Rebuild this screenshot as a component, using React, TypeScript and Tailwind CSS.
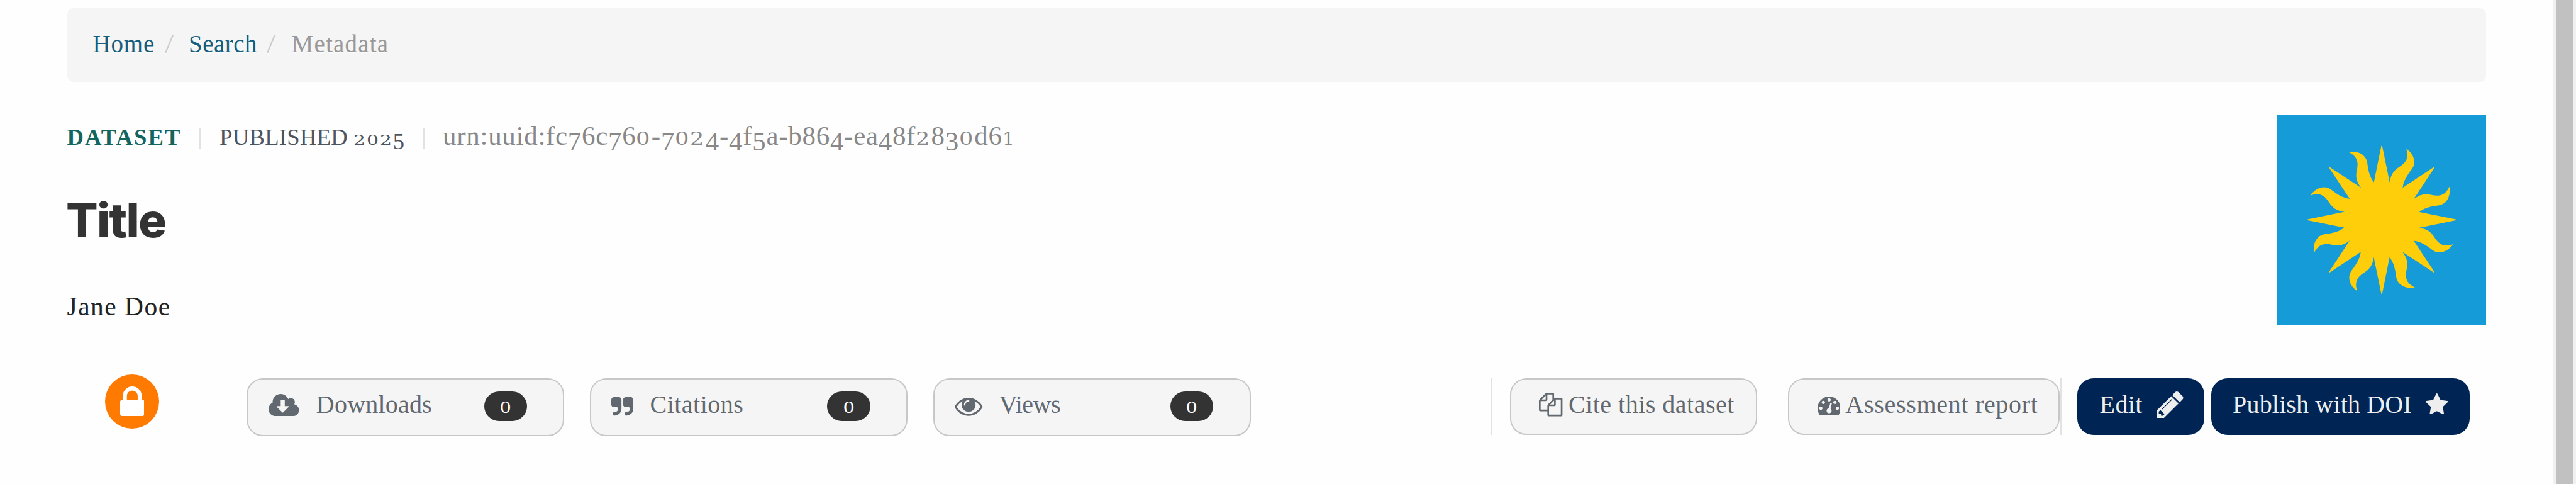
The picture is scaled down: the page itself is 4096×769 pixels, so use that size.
import React from "react";

const CLOUD =
  "M1280 928q0-14-9-23t-23-9h-224v-352q0-13-9.5-22.5t-22.5-9.5h-192q-13 0-22.5 9.5t-9.5 22.5v352h-224q-13 0-22.5 9.5t-9.5 22.5q0 14 9 23l352 352q9 9 23 9t23-9l351-351q10-12 10-24zm640 224q0 159-112.5 271.5t-271.5 112.5h-1088q-185 0-316.5-131.5t-131.5-316.5q0-130 70-240t188-165q-2-30-2-43 0-212 150-362t362-150q156 0 285.5 87t188.5 231q71-62 166-62 106 0 181 75t75 181q0 76-41 138 130 31 213.5 135.5t83.5 238.5z";
const QUOTE =
  "M768 320v704q0 104-40.5 198.5t-109.5 163.5-163.5 109.5-198.5 40.5h-64q-26 0-45-19t-19-45v-128q0-26 19-45t45-19h64q106 0 181-75t75-181v-32q0-40-28-68t-68-28h-224q-80 0-136-56t-56-136v-384q0-80 56-136t136-56h384q80 0 136 56t56 136zM1664 320v704q0 104-40.5 198.5t-109.5 163.5-163.5 109.5-198.5 40.5h-64q-26 0-45-19t-19-45v-128q0-26 19-45t45-19h64q106 0 181-75t75-181v-32q0-40-28-68t-68-28h-224q-80 0-136-56t-56-136v-384q0-80 56-136t136-56h384q80 0 136 56t56 136z";
const EYE =
  "M1664 960q-152-236-381-353 61 104 61 225 0 185-131.5 316.5t-316.5 131.5-316.5-131.5-131.5-316.5q0-121 61-225-229 117-381 353 133 205 333.5 326.5t434.5 121.5 434.5-121.5 333.5-326.5zm-720-384q0-20-14-34t-34-14q-125 0-214.5 89.5t-89.5 214.5q0 20 14 34t34 14 34-14 14-34q0-86 61-147t147-61q20 0 34-14t14-34zm848 384q0 34-20 69-140 230-376.5 368.5t-499.5 138.5-499.5-139-376.5-368q-20-35-20-69t20-69q140-229 376.5-368t499.5-139 499.5 139 376.5 368q20 35 20 69z";
const LOCK =
  "M320 768h512v-192q0-106-75-181t-181-75-181 75-75 181v192zm832 96v576q0 40-28 68t-68 28h-960q-40 0-68-28t-28-68v-576q0-40 28-68t68-28h32v-192q0-184 132-316t316-132 316 132 132 316v192h32q40 0 68 28t28 68z";
const FILES =
  "M1696 384q40 0 68 28t28 68v1216q0 40-28 68t-68 28h-960q-40 0-68-28t-28-68v-288h-544q-40 0-68-28t-28-68v-672q0-40 20-88t48-76l408-408q28-28 76-48t88-20h416q40 0 68 28t28 68v328q68-40 128-40h416zm-544 213l-299 299h299v-299zm-640-384l-299 299h299v-299zm196 647l316-316v-416h-384v416q0 40-28 68t-68 28h-416v640h512v-256q0-40 20-88t48-76zm956 804v-1152h-384v416q0 40-28 68t-68 28h-416v640h896z";
const GAUGE =
  "M384 1152q0-53-37.5-90.5t-90.5-37.5-90.5 37.5-37.5 90.5 37.5 90.5 90.5 37.5 90.5-37.5 37.5-90.5zm192-448q0-53-37.5-90.5t-90.5-37.5-90.5 37.5-37.5 90.5 37.5 90.5 90.5 37.5 90.5-37.5 37.5-90.5zm428 481l101-382q6-26-7.5-48.5t-38.5-29.5-48 6.5-30 39.5l-101 382q-60 5-107 43.5t-63 98.5q-20 77 20 146t117 89 146-20 89-117q16-60-6-117t-72-91zm660-33q0-53-37.5-90.5t-90.5-37.5-90.5 37.5-37.5 90.5 37.5 90.5 90.5 37.5 90.5-37.5 37.5-90.5zm-640-640q0-53-37.5-90.5t-90.5-37.5-90.5 37.5-37.5 90.5 37.5 90.5 90.5 37.5 90.5-37.5 37.5-90.5zm448 192q0-53-37.5-90.5t-90.5-37.5-90.5 37.5-37.5 90.5 37.5 90.5 90.5 37.5 90.5-37.5 37.5-90.5zm320 448q0 261-141 483-19 29-54 29h-1402q-35 0-54-29-141-221-141-483 0-182 71-348t191-286 286-191 348-71 348 71 286 191 191 286 71 348z";
const PENCIL =
  "M491 1536l91-91-235-235-91 91v107h128v128h107zm523-928q0-22-22-22-10 0-17 7l-542 542q-7 7-7 17 0 22 22 22 10 0 17-7l542-542q7-7 7-17zm-54-192l416 416-832 832h-416v-416zm683 96q0 53-37 90l-166 166-416-416 166-165q36-38 90-38 53 0 91 38l235 234q37 39 37 91z";
const STAR =
  "M1728 647q0 22-26 48l-363 354 86 500q1 7 1 20 0 21-10.5 35.5t-30.5 14.5q-19 0-40-12l-449-236-449 236q-22 12-40 12-21 0-31.5-14.5t-10.5-35.5q0-6 2-20l86-500-364-354q-25-27-25-48 0-37 56-46l502-73 225-455q19-41 49-41t49 41l225 455 502 73q56 9 56 46z";

const SERIF = "font-['Liberation_Serif',serif]";

function Icon({ d, box, className }: { d: string; box: string; className: string }) {
  return (
    <svg viewBox={box} preserveAspectRatio="none" fill="currentColor" className={`shrink-0 ${className}`}>
      <path d={d} />
    </svg>
  );
}

const SMALL_FIGURE = "inline-block origin-left font-['DejaVu_Serif',serif] text-[0.63em] leading-none tracking-normal";

// Old-style figures: 0-2 sit at x-height, 3 4 5 7 9 hang below the baseline.
function Figures({ children }: { children: string }) {
  return (
    <>
      {children.split(/([012]|[34579]+)/).map((run, i) => {
        if (run === "1")
          return (
            <span key={i} className={`w-[0.72em] scale-x-[1.1] ${SMALL_FIGURE}`}>
              {run}
            </span>
          );
        if (run === "0" || run === "2")
          return (
            <span key={i} className={`w-[0.9em] scale-x-[1.3] ${SMALL_FIGURE}`}>
              {run}
            </span>
          );
        if (/^[34579]/.test(run))
          return (
            <span key={i} className="align-[-0.2em] leading-[0]">
              {run}
            </span>
          );
        return run;
      })}
    </>
  );
}

function Sun() {
  const turns = [0, 45, 90, 135, 180, 225, 270, 315];
  return (
    <svg viewBox="-311.5 -312 623.5 624" className="h-[332.5px] w-[332.5px] shrink-0 bg-[#169bd9]">
      <g fill="#ffce0a">
        <circle r="114" />
        {turns.map((a) => (
          <g key={a} transform={`rotate(${a})`}>
            <path d="M-26-100L-23.5-111L-1.2-221L1.2-221L23.5-113L26-100Z" />
            <path d="M22-100L24-112C27-136 37-147 51.2-156.6C69-168 84-182 72.7-213C88-202 97-187 97-172.6C97-162 93-154 85.8-145.7C72-127 64-112 62.5-94L50-80Z" />
          </g>
        ))}
      </g>
    </svg>
  );
}

function Badge() {
  return (
    <span className="mt-[19.3px] flex h-[47px] w-[68.5px] shrink-0 justify-center rounded-[23.5px] bg-[#333] font-['DejaVu_Serif',serif] text-[24px] leading-[52px] text-white">
      <span className="scale-x-[1.2]">0</span>
    </span>
  );
}

function Metric({ children }: { children: React.ReactNode }) {
  return (
    <button className="mt-[6px] mr-[41.3px] flex h-[92px] w-[504.7px] shrink-0 items-start rounded-[26px] border-2 border-[#c6c8c8] bg-[#f5f5f5] text-[#62686f]">
      {children}
    </button>
  );
}

const LABEL = "shrink-0 whitespace-nowrap text-left text-[40px] leading-[46px]";

export default function App() {
  return (
    <div className={`flex h-[769px] w-[4096px] overflow-hidden bg-[#fefefe] ${SERIF}`}>
      <main className="flex w-[4060px] shrink-0 flex-col">
        <nav className="mt-[13px] ml-[106.5px] flex h-[117px] w-[3846.5px] items-center rounded-[10px] bg-[#f5f5f5] pb-[2.2px] pl-[41px] text-[39px] leading-[46px] whitespace-nowrap text-[#155e7e] [text-shadow:0_2px_0_#fff]">
          <a className="w-[114px] tracking-[0.8px]">Home</a>
          <span className="w-[38.5px] origin-left scale-x-[1.2] text-[42px] text-[#ccc]">/</span>
          <a className="w-[124px] tracking-[0.5px]">Search</a>
          <span className="w-[39.5px] origin-left scale-x-[1.2] text-[42px] text-[#ccc]">/</span>
          <span className="tracking-[1.2px] text-[#999]">Metadata</span>
        </nav>

        <header className="mt-[53.3px] ml-[106.5px] flex w-[3846.5px] justify-between">
          <div className="flex flex-col pt-[10.6px]">
            <div className="flex h-[44px] items-baseline leading-[44px] whitespace-nowrap">
              <span className="w-[210.5px] text-[36.6px] font-bold tracking-[2.1px] text-[#12665f]">DATASET</span>
              <span className="mt-[10.4px] h-[33px] w-[2.5px] self-start bg-[#e2e2e2]" />
              <span className="ml-[29.6px] w-[323.5px] text-[36.6px] tracking-[0.3px] text-[#4c555d]">
                <Figures>PUBLISHED 2025</Figures>
              </span>
              <span className="mt-[10.4px] h-[33px] w-[2.5px] self-start bg-[#e2e2e2]" />
              <span className="ml-[29px] text-[43px] tracking-[0.7px] text-[#888]">
                <Figures>urn:uuid:fc76c760-7024-4f5a-b864-ea48f2830d61</Figures>
              </span>
            </div>
            <h1 className="mt-[72px] -ml-[1.5px] h-[80px] font-['Inter',sans-serif] text-[75px] leading-[80px] font-extrabold tracking-[-1.8px] text-[#333]">
              Title
            </h1>
            <p className="mt-[74px] text-[41.5px] leading-[46px] tracking-[1.5px] text-[#212424]">Jane Doe</p>
          </div>
          <Sun />
        </header>

        <section className="mt-[79.3px] flex items-start pl-[167.4px]">
          <span className="mr-[139.6px] flex h-[86px] w-[85.3px] shrink-0 items-start justify-center rounded-full bg-[#ff7a00] text-white">
            <Icon d={LOCK} box="0 128 1152 1408" className="mt-[19px] h-[47px] w-[38.7px]" />
          </span>

          <Metric>
            <Icon d={CLOUD} box="0 128 1920 1408" className="mt-[22.6px] ml-[32.7px] h-[35.2px] w-[48.4px]" />
            <span className={`mt-[17px] ml-[27.5px] w-[266.7px] tracking-[0.2px] ${LABEL}`}>Downloads</span>
            <Badge />
          </Metric>
          <Metric>
            <Icon d={QUOTE} box="0 128 1664 1408" className="mt-[28.4px] ml-[32.2px] h-[29.2px] w-[35px]" />
            <span className={`mt-[17px] ml-[26px] w-[281.7px] tracking-[0.5px] ${LABEL}`}>Citations</span>
            <Badge />
          </Metric>
          <Metric>
            <Icon d={EYE} box="0 384 1792 1152" className="mt-[28.9px] ml-[32.2px] h-[28.8px] w-[44.3px]" />
            <span className={`mt-[17px] ml-[26px] w-[272px] tracking-[-0.5px] ${LABEL}`}>Views</span>
            <Badge />
          </Metric>

          <span className="mt-[6px] ml-[340.9px] h-[90px] w-[2px] shrink-0 bg-[#e2e2e2]" />
          <button className="mt-[6px] ml-[28px] flex h-[90px] w-[392.5px] shrink-0 items-start rounded-[26px] border-2 border-[#c6c8c8] bg-[#f5f5f5] text-[#62686f]">
            <Icon d={FILES} box="0 0 1792 1792" className="mt-[21.4px] ml-[44px] h-[37.4px] w-[37.4px]" />
            <span className={`mt-[17px] ml-[9.4px] tracking-[0.5px] ${LABEL}`}>Cite this dataset</span>
          </button>
          <button className="mt-[6px] ml-[48.9px] flex h-[90px] w-[432.8px] shrink-0 items-start rounded-[26px] border-2 border-[#c6c8c8] bg-[#f5f5f5] text-[#62686f]">
            <Icon d={GAUGE} box="0 256 1792 1408" className="mt-[26.8px] ml-[45px] h-[29.3px] w-[36.8px]" />
            <span className={`mt-[17px] ml-[8px] tracking-[0.7px] ${LABEL}`}>Assessment report</span>
          </button>
          <span className="mt-[6px] ml-[0.3px] h-[90px] w-[2px] shrink-0 bg-[#e2e2e2]" />
          <button className="mt-[6px] ml-[25px] flex h-[90px] w-[202.5px] shrink-0 items-start rounded-[26px] bg-[#002554] text-[#eee]">
            <span className={`mt-[19px] ml-[36px] w-[90.6px] tracking-[0.4px] ${LABEL}`}>Edit</span>
            <Icon d={PENCIL} box="128 149 1515 1515" className="mt-[21.2px] h-[42.2px] w-[42.5px]" />
          </button>
          <button className="mt-[6px] ml-[10.8px] flex h-[90px] w-[411.5px] shrink-0 items-start rounded-[26px] bg-[#002554] text-[#eee]">
            <span className={`mt-[19px] ml-[34.2px] w-[307.2px] tracking-[0.15px] ${LABEL}`}>Publish with DOI</span>
            <Icon d={STAR} box="64 32 1664 1587" className="mt-[23.9px] h-[33.4px] w-[35.5px]" />
          </button>
        </section>
      </main>
      <aside className="flex-1 border-x-4 border-[#f0f0f0] bg-[#c1c1c1]" />
    </div>
  );
}
